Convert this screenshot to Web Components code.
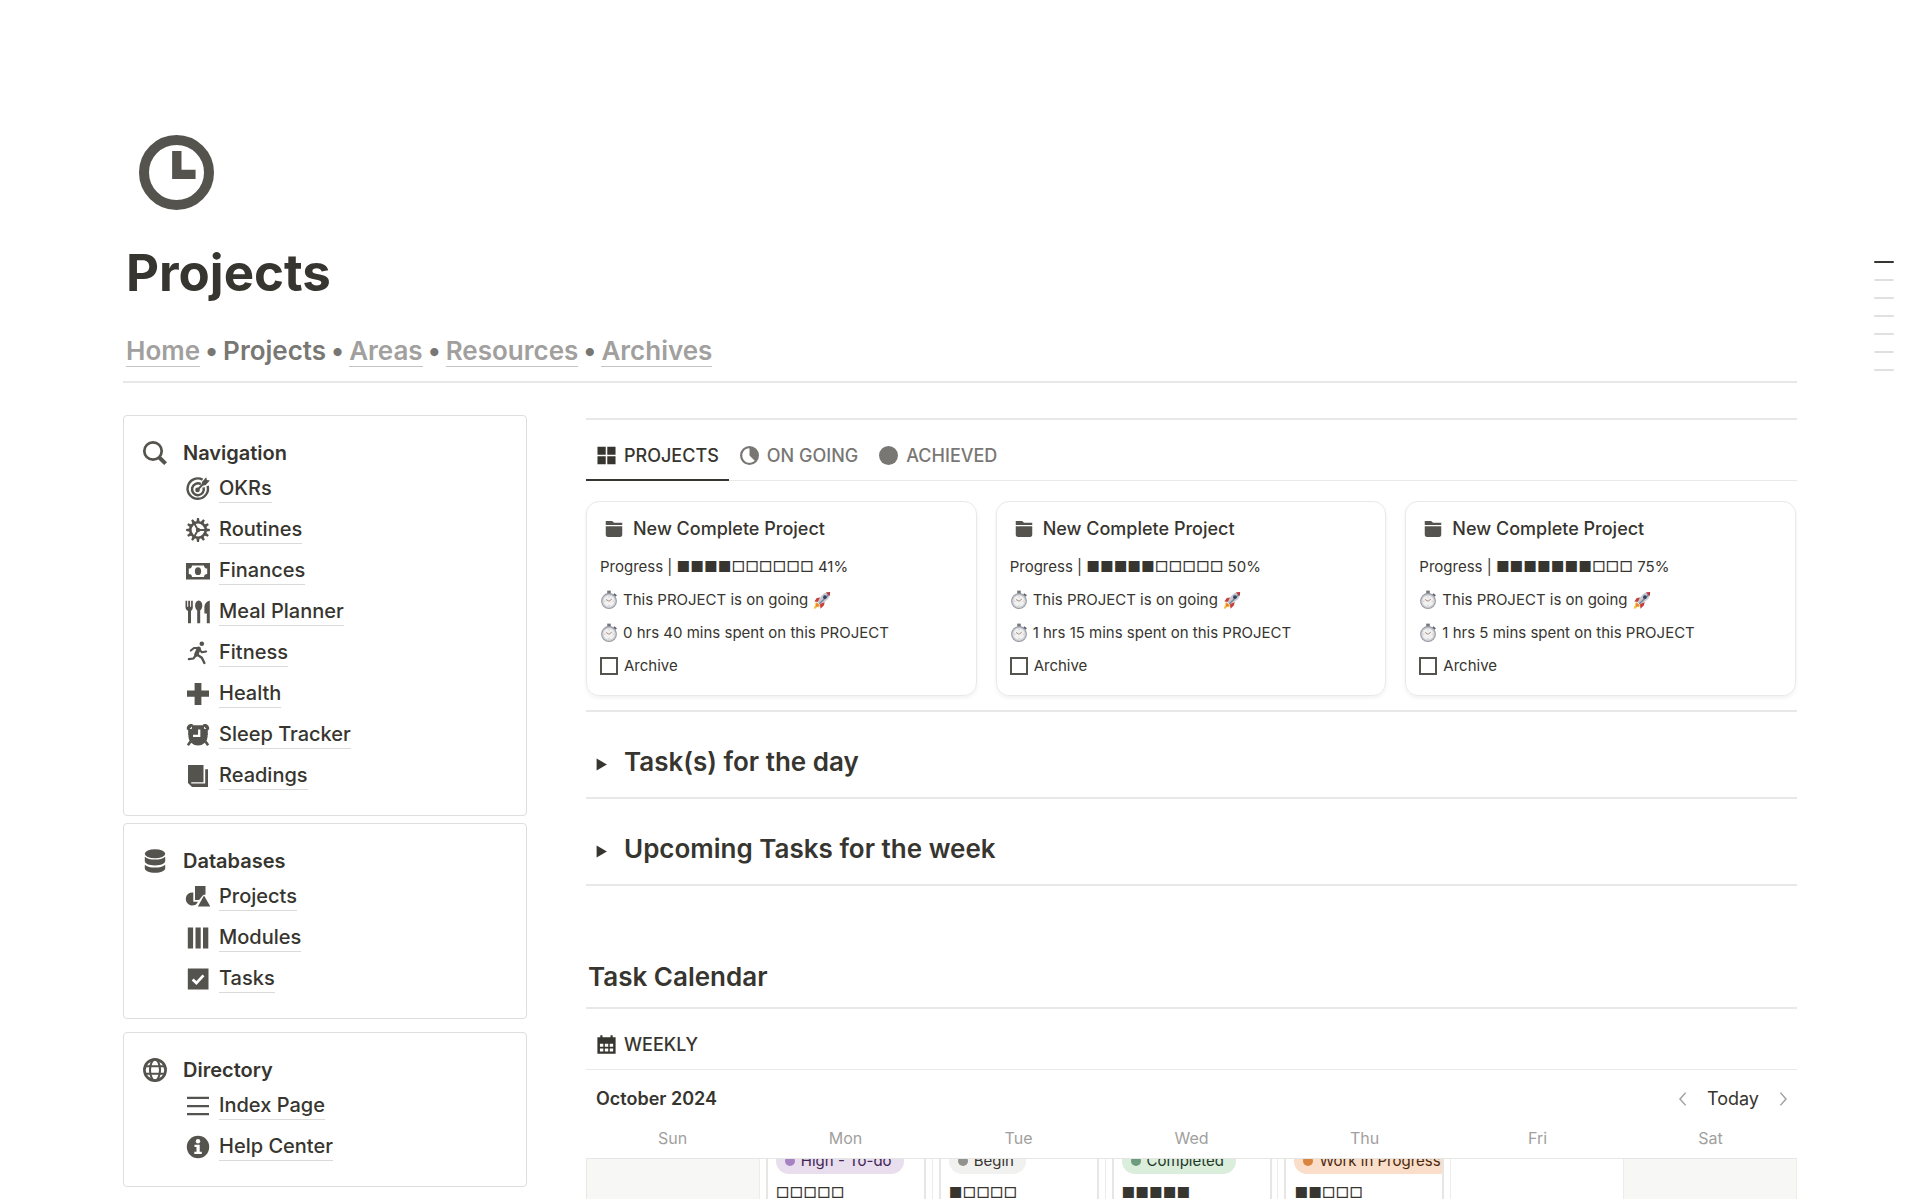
<!DOCTYPE html>
<html lang="en">
<head>
<meta charset="utf-8">
<meta name="viewport" content="width=device-width, initial-scale=1">
<title>Projects</title>
<style>
  html { height: 100%; }
  body {
    margin: 0; height: 100%; overflow: hidden; background: #fff; color: #37352f;
    font-family: Inter, "Liberation Sans", sans-serif;
    --ink: #37352f; --icon: #55534e; --muted: #787774; --faint: #a1a09e; --rule: #e8e8e7;
  }
</style>
</head>
<body>
<projects-page></projects-page>

<script>
const define = (name, css, html, setup) => {
  const tpl = document.createElement('template');
  tpl.innerHTML = `<style>*{box-sizing:border-box}:host{display:block;box-sizing:border-box}${css}</style>${html}`;
  customElements.define(name, class extends HTMLElement {
    constructor() {
      super();
      this.attachShadow({ mode: 'open' }).append(tpl.content.cloneNode(true));
    }
    connectedCallback() {
      if (setup && !this.ready) { this.ready = true; setup(this, this.shadowRoot); }
    }
  });
};

/* ---------- icons ---------- */
const spin = (n, shape) => Array.from({ length: n }, (_, i) => `<g transform="rotate(${i * 360 / n} 12 12)">${shape}</g>`).join('');
const ICONS = {
  clock: `<circle cx="12" cy="12" r="10.4" fill="none" stroke="currentColor" stroke-width="3.2"/><path d="M10.6 5.1h3v6h4.5v3h-7.5z"/>`,
  search: `<circle cx="10" cy="10" r="8.7" fill="none" stroke="currentColor" stroke-width="2.7"/><path d="M16 16.2l6.6 6.4" stroke="currentColor" stroke-width="4"/>`,
  target: `<g fill="none" stroke="currentColor"><path d="M16.6 2.6a10.2 10.2 0 1 0 5 6.2" stroke-width="2.4"/><path d="M14.9 7.2a5.9 5.9 0 1 0 2.6 3.2" stroke-width="2.5"/><path d="M11.4 13L18 6" stroke-width="2"/></g><circle cx="11.5" cy="12.9" r="2.3"/><path d="M16 4.9L20.2.2l.7 2.900 3 .5-4.400 4.700-3.600.2z"/>`,
  gear: `<circle cx="12" cy="12" r="7.7" fill="none" stroke="currentColor" stroke-width="2.6"/>${spin(12, '<path d="M10.300 4.4L11 .1h2l.7 4.300z"/>')}${spin(3, '<path d="M12 12h8" stroke="currentColor" stroke-width="1.9"/>')}<circle cx="12" cy="12" r="2.2"/>`,
  money: `<path fill-rule="evenodd" d="M0 4h24v16.4H0zM6 6.4a3.2 3.2 0 0 1-3.2 3.1v5.4A3.2 3.2 0 0 1 6 18h12a3.2 3.2 0 0 1 3.2-3.1V9.5A3.2 3.2 0 0 1 18 6.4z"/><ellipse cx="12" cy="12.2" rx="3.1" ry="3.9"/>`,
  meal: `<path d="M-.5.8h1.700v6h1V.8h1.900v6h1v-6h1.700v6.400c0 2-.7 3-1.800 3.700v12.400H2V10.900C.5 10.200-.5 9-.5 7.200zM12.700.6c2.200 0 3.600 2.200 3.600 5 0 2.300-.8 4-2.100 4.800v12.900h-3V10.400C9.900 9.600 9.100 7.900 9.100 5.600c0-2.800 1.400-5 3.600-5zM23.800.8v22.500h-3V13.500h-2.400V7.500c0-3.400 2-6 5.400-6.700z"/>`,
  run: `<circle cx="15.8" cy="2.700" r="2.300"/><g fill="none" stroke="currentColor" stroke-linecap="round" stroke-linejoin="round"><path d="M4.800 9.600l3.200-2.700 4.600.2 3.200 4.200 4.400-.9" stroke-width="2"/><path d="M12.800 7.600l-2.600 6" stroke-width="4.200"/><path d="M10.200 13.800l-2.800 3.700-4.600.6" stroke-width="2.200"/><path d="M11 13.500l4.800 3.300 2.600 5.200" stroke-width="2.400"/></g>`,
  plus: `<path d="M8.600 1h6.800v7.600H23v6.200h-7.600V23H8.600v-8.200H1V8.600h7.600z"/>`,
  alarm: `<circle cx="12" cy="12.900" r="9.700"/><path d="M.900 6.300C.200 3.200 2.900.300 6 1.100l1.400 1L2.200 7.400zM23.100 6.300C23.800 3.200 21.100.300 18 1.100l-1.400 1 5.200 5.300z"/><path d="M4.500 18.500l-2.600 3.700M19.500 18.500l2.600 3.700" stroke="currentColor" stroke-width="2.600"/><path d="M6 2.200h12v4H6zM2.200 6h4v6h-4zM17.800 6h4v6h-4z"/><path d="M13.200 6.500v6.300H7" fill="none" stroke="#fff" stroke-width="2.300"/>`,
  book: `<path d="M2 1h15.500v17.200H5.200v1.300h14V5.200H22V22.900H6L2 19z"/>`,
  database: `<ellipse cx="12" cy="4.700" rx="10.200" ry="4.500"/><path d="M1.800 7.700c2 2 6 2.900 10.200 2.900s8.200-.9 10.200-2.900v4.400c0 2.500-4.400 4.400-10.200 4.400S1.800 14.600 1.800 12.100zM1.800 15.700c2 2 6 2.900 10.200 2.900s8.200-.9 10.200-2.900v3.600c0 2.500-4.400 4.500-10.200 4.500S1.800 21.800 1.800 19.300z"/>`,
  shapes: `<path d="M9 1h10.500v8.500l-2.400.5-4 5H9zM7.300 7.500v9.200h4.600l-1.400 2.200A6.500 6.500 0 1 1 7.300 7.500zM18 10.500l6.300 10.900H11.900z"/>`,
  columns: `<path d="M1.800 1.500h5.300v21H1.800zM9.500 1.500h5.200v21H9.500zM17 1.500h5.300v21H17z"/>`,
  check: `<path d="M1.800 1.500h20.700v21H1.800z"/><path d="M6.700 12.600l3.700 3.500 7.100-7.700" fill="none" stroke="#fff" stroke-width="2.800"/>`,
  globe: `<g fill="none" stroke="currentColor" stroke-width="2.100"><circle cx="12" cy="12" r="10.600" stroke-width="2.700"/><ellipse cx="12" cy="12" rx="5" ry="10.600"/><path d="M1 8.300h22M1 15.700h22"/></g>`,
  list: `<path d="M1 2.700h22V5H1zM1 10.900h22v2.300H1zM1 19h22v2.300H1z"/>`,
  info: `<circle cx="12" cy="12" r="11.200"/><circle cx="12" cy="6.200" r="2.200" fill="#fff"/><path d="M8.500 9.800h5.200v7h2.100v2.200H8.300v-2.200h2.200v-4.800h-2z" fill="#fff"/>`,
  grid: `<path d="M.6 1h10.400v10H.6zM13 1h10.400v10H13zM.6 13h10.400v10H.6zM13 13h10.400v10H13z"/>`,
  pie: `<path fill-rule="evenodd" d="M12 0a12 12 0 1 1 0 24 12 12 0 0 1 0-24zM12 2.700a9.300 9.300 0 1 0 6.600 16L12 12z"/>`,
  dot: `<circle cx="12" cy="12" r="12"/>`,
  folder: `<path d="M1 1.200h8.500l2.600 2.400H23v3.200H1zM1 8.400h22v11c0 2-1 3.200-3 3.200H4c-2 0-3-1.200-3-3.200z"/>`,
  calendar: `<path fill-rule="evenodd" d="M4.200.300h2.700v2.400h10.200V.3h2.700v2.400h3.700v21H.500v-21h3.700zM3.700 11v3.700h4.300V11zM9.900 11v3.700h4.300V11zM16.100 11v3.700h4.300V11zM3.700 17v3.700h4.300V17zM9.900 17v3.700h4.300V17zM16.100 17v3.700h4.300V17z"/>`,
  left: `<path d="M15.500 3.500L8 12l7.500 8.500" fill="none" stroke="currentColor" stroke-width="2"/>`,
  right: `<path d="M8.500 3.500L16 12l-7.500 8.500" fill="none" stroke="currentColor" stroke-width="2"/>`,
  caret: `<path d="M3 1L22 12 3 23z"/>`,
  stopwatch: `<path d="M9.600-.5h4.800v5H9.600z" fill="#77777f"/><path d="M19 2.900l3.600 2.900-1.900 2-3.200-2.600z" fill="#5f5f6a"/><circle cx="12" cy="13.400" r="10.600" fill="#9a9ba4"/><circle cx="12" cy="13.400" r="9.200" fill="#cfd0d6"/><circle cx="12" cy="13.400" r="7.400" fill="#f1f1ef"/><path d="M12 7v1.600M12 18.600v1.600M5.400 13.600H7M17 13.600h1.600" stroke="#aaa" stroke-width=".8"/><path d="M8 11.300l4 2.400 3.800-2.900" fill="none" stroke="#a8807a" stroke-width="1.200"/>`,
  rocket: `<path d="M4.500 14.500l5 5-1.800 2.300-2.200-.5L3 23.500l-1.800.2L1.500 21l1.700-2.500-.5-2z" fill="#f6c244"/><path d="M5 15.500l3.500 3.500-3 1.800-1.700.2.200-2z" fill="#ef7d35"/><path d="M9.500 8.500L5 9.300 1.800 14l5.700.5zM15.500 14.500l-.8 4.500-4.700 4.500-.8-6.500z" fill="#c8403a"/><path d="M22.800 1.200c-5.500-.3-9.600 1.800-12.500 6.300L6 15l3 3 7.500-4.300c4.500-2.900 6.600-7 6.300-12.500z" fill="#c3c8d2"/><path d="M22.800 1.200l-.2 3-13 13.200L9 18l-1.400-1.400z" fill="#7b8494"/><path d="M22.800 1.200c-2 0-4 .2-5.600.9l4.700 4.700c.7-1.600.9-3.600.9-5.600z" fill="#b8383a"/><circle cx="15.800" cy="8.200" r="2.400" fill="#31405c"/>`
};
define('ui-icon', `:host{flex:none;width:var(--size,24px);height:var(--size,24px)}svg{display:block;width:100%;height:100%;overflow:visible}`,
  `<svg viewBox="0 0 24 24" fill="currentColor" aria-hidden="true"></svg>`,
  (el, root) => { root.querySelector('svg').innerHTML = ICONS[el.getAttribute('name')]; });

define('ui-rule', `:host{height:2px;background:var(--rule)}`, ``);

/* ---------- page head ---------- */
define('bread-crumbs', `nav{display:flex;gap:5px;font-size:26px;line-height:34px;font-weight:600;color:var(--muted);white-space:nowrap}
  ::slotted(a){height:33px;color:var(--faint);text-decoration:none;border-bottom:1px solid #c4c4c2}`,
  `<nav aria-label="Breadcrumb"><slot></slot></nav>`);

define('outline-rail', `:host{position:fixed;top:261px;right:26px}nav{display:grid;gap:16px}
  a{display:block;width:20px;height:2px;border-radius:1px;background:#e0e0df}a:first-child{background:var(--ink)}`,
  `<nav aria-label="Page outline">${'<a href="#"></a>'.repeat(7)}</nav>`);

/* ---------- sidebar ---------- */
define('side-callout', `:host{border:1px solid #dededc;border-radius:4px;padding:21px 19px 19px}
  header{display:flex;align-items:center;gap:16px;height:31px}
  header ui-icon{color:var(--icon)}
  h2{margin:0;font-size:20px;line-height:32px;font-weight:600}
  ul{margin:0;padding:0 0 0 43px;list-style:none}`,
  `<header><ui-icon></ui-icon><h2></h2></header><ul role="list"><slot></slot></ul>`,
  (el, root) => {
    const old = root.querySelector('ui-icon'), icon = document.createElement('ui-icon');
    icon.setAttribute('name', el.getAttribute('icon')); old.replaceWith(icon);
    root.querySelector('h2').textContent = el.getAttribute('heading');
  });

define('side-link', `li{display:flex;align-items:center;gap:9px;height:41px}ui-icon{color:var(--icon)}
  a{color:inherit;text-decoration:none;font-size:20px;line-height:28px;font-weight:500;border-bottom:1px solid #dadad8}`,
  `<li><a href="#"><slot></slot></a></li>`,
  (el, root) => {
    const icon = document.createElement('ui-icon');
    icon.setAttribute('name', el.getAttribute('icon')); root.querySelector('li').prepend(icon);
  });

/* ---------- tabs ---------- */
define('view-tabs', `:host{display:flex;height:61px;border-bottom:1px solid #e9e9e7}`, `<slot></slot>`);
define('view-tab', `:host{--size:19px}
  button{display:flex;align-items:center;gap:8px;height:61px;padding:12px 10px 0 11px;border:0;border-bottom:2px solid transparent;background:none;color:var(--muted);font:500 18px/24px Inter,sans-serif}
  :host([active]) button{color:var(--ink)}:host([underlined]) button{border-color:var(--ink)}`,
  `<button type="button"><slot></slot></button>`,
  (el, root) => {
    const icon = document.createElement('ui-icon');
    icon.setAttribute('name', el.getAttribute('icon')); root.querySelector('button').prepend(icon);
  });

/* ---------- project card ---------- */
define('project-card', `:host{border:1px solid #e9e9e8;border-radius:13px;padding:10px 13px 13px;box-shadow:0 2px 4px rgba(15,15,15,.06);font-size:15px}
  h3{display:flex;align-items:center;gap:10px;margin:0 0 5px;padding-left:5px;height:33px;font-size:18px;font-weight:500;--size:18px}
  h3 ui-icon{color:var(--icon)}
  p,label{display:flex;align-items:center;gap:5px;margin:0;height:33px;line-height:24px;white-space:nowrap;--size:18px}
  label{gap:6px}
  input{appearance:none;margin:0;width:18px;height:18px;border:2px solid var(--icon);background:#fff}`,
  `<h3><ui-icon name="folder"></ui-icon>New Complete Project</h3>
   <p class="bar"></p>
   <p><ui-icon name="stopwatch"></ui-icon><span>This PROJECT is on going</span><ui-icon name="rocket"></ui-icon></p>
   <p><ui-icon name="stopwatch"></ui-icon><span class="time"></span></p>
   <label><input type="checkbox"><span>Archive</span></label>`,
  (el, root) => {
    const n = +el.getAttribute('filled');
    root.querySelector('.bar').textContent = `Progress | ${'■'.repeat(n)}${'□'.repeat(10 - n)} ${el.getAttribute('percent')}%`;
    root.querySelector('.time').textContent = `${el.getAttribute('time')} spent on this PROJECT`;
  });

/* ---------- toggle heading ---------- */
define('toggle-heading', `:host{--size:13px}
  button{display:flex;align-items:center;gap:16px;width:100%;height:85px;padding:14px 0 0 9px;border:0;background:none;text-align:left;color:var(--ink);font:600 26px/34px Inter,sans-serif}
  ui-icon{margin-top:6px}`,
  `<button type="button" aria-expanded="false"><ui-icon name="caret"></ui-icon><slot></slot></button>`);

/* ---------- calendar ---------- */
define('task-event', `:host{display:flex;flex-direction:column;align-items:flex-start;gap:5px;width:160px;margin:-60px 0 0 6px;padding:47px 8px 8px;border:2px solid #e6e6e5;border-radius:8px;background:#fff;overflow:hidden;white-space:nowrap;font-size:15px}
  .chip{display:flex;align-items:center;gap:6px;height:26px;padding:0 12px 0 9px;border-radius:13px;line-height:26px;background:var(--bg);color:var(--fg)}
  .chip::before{content:"";width:10px;height:10px;border-radius:50%;background:var(--dot)}
  .steps{line-height:28px}
  :host([tone=purple]){--bg:#e8deee;--fg:#412454;--dot:#a782c3}
  :host([tone=gray]){--bg:#f1f1ef;--fg:#37352f;--dot:#91918e}
  :host([tone=green]){--bg:#dbeddb;--fg:#1c3829;--dot:#6c9b7d}
  :host([tone=orange]){--bg:#fadec9;--fg:#49290e;--dot:#d9843f}`,
  `<div class="chip"><slot></slot></div><div class="steps"></div>`,
  (el, root) => {
    const n = +el.getAttribute('steps');
    root.querySelector('.steps').textContent = '■'.repeat(n) + '□'.repeat(5 - n);
  });
define('day-cell', `:host{overflow:hidden;border-right:1px solid #ececea}:host([weekend]){background:#f7f7f5}`, `<slot></slot>`);
define('week-calendar', `.bar{display:flex;align-items:center;height:58px;padding:0 5px 0 10px;font-size:18px;line-height:24px}
  h3{margin:0 auto 0 0;font-size:18px;font-weight:600}
  button{border:0;background:none;padding:0;color:var(--ink);font:400 18px/24px Inter,sans-serif;--size:18px}
  button.step{color:var(--faint)}
  .controls{display:flex;align-items:center;gap:15px}
  .names,.days{display:grid;grid-template-columns:repeat(7,minmax(0,1fr))}
  .names{height:31px;line-height:20px;font-size:16px;color:var(--faint);text-align:center;border-bottom:1px solid #e6e6e5}
  .days{border-left:1px solid #e9e9e7}`,
  `<div class="bar"><h3>October 2024</h3><div class="controls">
     <button class="step" type="button" aria-label="Previous week"><ui-icon name="left"></ui-icon></button>
     <button type="button">Today</button>
     <button class="step" type="button" aria-label="Next week"><ui-icon name="right"></ui-icon></button></div></div>
   <div class="names"><span>Sun</span><span>Mon</span><span>Tue</span><span>Wed</span><span>Thu</span><span>Fri</span><span>Sat</span></div>
   <div class="days"><slot></slot></div>`);

/* ---------- page ---------- */
define('projects-page', `:host{padding:122px 123px 0}
  .mark{--size:75px;color:var(--icon);padding:13px 16px;width:107px;height:101px}
  h1{margin:19px 0 0;padding-left:3px;font-size:51px;line-height:62px;font-weight:700}
  bread-crumbs{margin:30px 0 13px;padding-left:3px}
  .columns{display:grid;grid-template-columns:minmax(0,404fr) minmax(0,1211fr);column-gap:59px;margin-top:32px}
  .side{display:flex;flex-direction:column;gap:7px}
  .side > :last-child{margin-top:6px}
  main{padding-top:3px}
  .cards{display:grid;grid-template-columns:repeat(3,minmax(0,1fr));gap:19px;margin:20px 1px 14px 0}
  h2{margin:74px 0 13px;padding-left:2px;font-size:26px;line-height:34px;font-weight:600}`,
  `<div class="mark"><ui-icon name="clock"></ui-icon></div>
   <h1>Projects</h1>
   <bread-crumbs><a href="#">Home</a><span>•</span><span>Projects</span><span>•</span><a href="#">Areas</a><span>•</span><a href="#">Resources</a><span>•</span><a href="#">Archives</a></bread-crumbs>
   <ui-rule></ui-rule>
   <div class="columns">
     <aside class="side">
       <side-callout icon="search" heading="Navigation">
         <side-link icon="target">OKRs</side-link><side-link icon="gear">Routines</side-link>
         <side-link icon="money">Finances</side-link><side-link icon="meal">Meal Planner</side-link>
         <side-link icon="run">Fitness</side-link><side-link icon="plus">Health</side-link>
         <side-link icon="alarm">Sleep Tracker</side-link><side-link icon="book">Readings</side-link>
       </side-callout>
       <side-callout icon="database" heading="Databases">
         <side-link icon="shapes">Projects</side-link><side-link icon="columns">Modules</side-link><side-link icon="check">Tasks</side-link>
       </side-callout>
       <side-callout icon="globe" heading="Directory">
         <side-link icon="list">Index Page</side-link><side-link icon="info">Help Center</side-link>
       </side-callout>
     </aside>
     <main>
       <ui-rule></ui-rule>
       <view-tabs>
         <view-tab icon="grid" active underlined>PROJECTS</view-tab>
         <view-tab icon="pie">ON GOING</view-tab>
         <view-tab icon="dot">ACHIEVED</view-tab>
       </view-tabs>
       <div class="cards">
         <project-card filled="4" percent="41" time="0 hrs 40 mins"></project-card>
         <project-card filled="5" percent="50" time="1 hrs 15 mins"></project-card>
         <project-card filled="7" percent="75" time="1 hrs 5 mins"></project-card>
       </div>
       <ui-rule></ui-rule>
       <toggle-heading>Task(s) for the day</toggle-heading>
       <ui-rule></ui-rule>
       <toggle-heading>Upcoming Tasks for the week</toggle-heading>
       <ui-rule></ui-rule>
       <h2>Task Calendar</h2>
       <ui-rule></ui-rule>
       <view-tabs><view-tab icon="calendar" active>WEEKLY</view-tab></view-tabs>
       <week-calendar>
         <day-cell weekend></day-cell>
         <day-cell><task-event tone="purple" steps="0">High - To-do</task-event></day-cell>
         <day-cell><task-event tone="gray" steps="1">Begin</task-event></day-cell>
         <day-cell><task-event tone="green" steps="5">Completed</task-event></day-cell>
         <day-cell><task-event tone="orange" steps="2">Work in Progress</task-event></day-cell>
         <day-cell></day-cell>
         <day-cell weekend></day-cell>
       </week-calendar>
     </main>
   </div>
   <outline-rail></outline-rail>`);
</script>
</body>
</html>
